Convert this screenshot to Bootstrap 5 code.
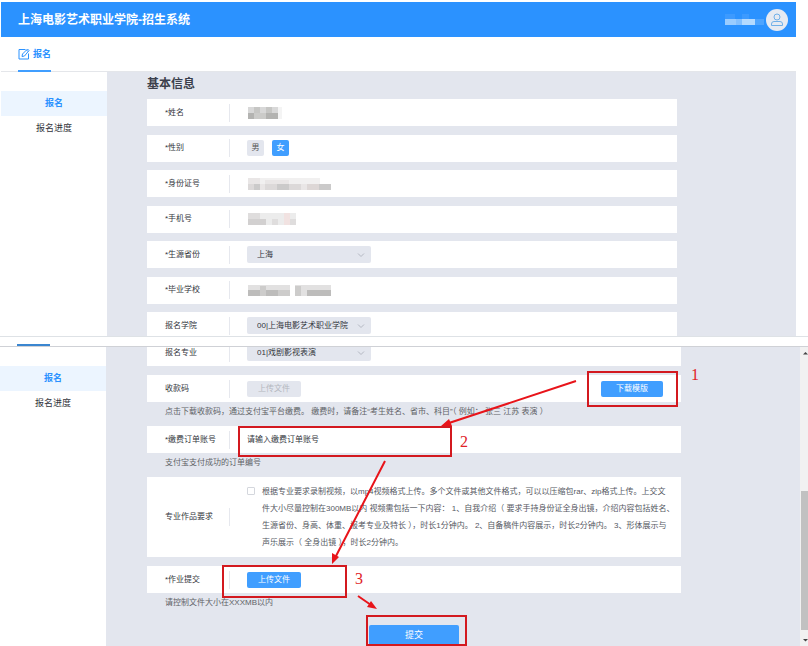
<!DOCTYPE html>
<html lang="zh-CN">
<head>
<meta charset="utf-8">
<meta name="viewport" content="width=device-width, initial-scale=1">
<title>上海电影艺术职业学院-招生系统</title>
<link href="https://cdn.jsdelivr.net/npm/bootstrap@5.3.0/dist/css/bootstrap.min.css" rel="stylesheet">
<style>
  :root { --brand: #2b92ff; --accent: #409eff; --canvas: #e3e6ee; --ink: #33363d; --soft: #606266; }
  body { font-family: "Liberation Sans", "Noto Sans CJK SC", sans-serif; font-size: 8px; line-height: 12px; color: var(--ink); background: #fff; }
  .page { min-height: 100vh; }
  .screen-a { margin: 2px 12px 0 1px; }
  .topbar { background: var(--brand); height: 35px; padding: 0 8px 0 17px; }
  .brand-name { font-size: 12px; line-height: 16px; font-weight: 700; color: #fff; margin: 0; }
  .avatar { width: 22px; height: 22px; }
  .tabs { height: 35px; padding-left: 17px; border-bottom: 1px solid #e4e6ea; }
  .tab-link { color: var(--brand); font-size: 9px; font-weight: 700; gap: 3px; border-bottom: 2px solid var(--accent); margin-bottom: -1px; }
  .side { width: 106px; background: #fff; padding-top: 19px; }
  .side a { display: block; height: 25px; line-height: 25px; font-size: 9px; text-align: center; color: var(--ink); text-decoration: none; }
  .side a.current { background: #ecf5ff; color: var(--brand); font-weight: 700; }
  .canvas { background: var(--canvas); padding-left: 40px; min-width: 0; }
  .screen-a .viewport { height: 264px; overflow: hidden; }
  .sheet-title { font-size: 12px; line-height: 16px; font-weight: 700; color: #3b3f4c; margin: 0; padding: 4px 0 7px; }
  .fields { max-width: 530px; min-height: 240px; }
  .field-row { background: #fff; min-height: 27px; padding-left: 18px; }
  .field-name { width: 65px; height: 18px; line-height: 18px; border-right: 1px solid #e6e8ee; margin-right: 17px; flex: none; }
  .chip, .act { border: 0; font-size: 8px; line-height: 16px; height: 16px; padding: 0; border-radius: 2px; background: var(--accent); color: #fff; }
  .chip { width: 17px; }
  .chip.off { background: var(--canvas); color: #555; }
  .act { width: 54px; }
  .act.wide { width: 62px; margin-right: 18px; }
  .act:disabled { background: var(--canvas); color: #b4b7be; }
  .pick { width: 124px; height: 17px; min-height: 0; padding: 0 16px 0 10px; font-size: 8px; line-height: 16px; border: 0; border-radius: 2px; color: var(--ink);
    background: var(--canvas) url("data:image/svg+xml,%3Csvg xmlns='http://www.w3.org/2000/svg' viewBox='0 0 8 8'%3E%3Cpath d='M1 2.5l3 3 3-3' fill='none' stroke='%23b4b8c2'/%3E%3C/svg%3E") no-repeat right 6px center / 8px 8px; }
  .divide { height: 10px; }
  .divide i { display: block; width: 33px; height: 2px; margin-left: 17px; background: #3a86d0; }
  .screen-b { border-top: 1px solid #cfd1d6; flex: 1 0 0; height: 300px; overflow: hidden; }
  .screen-b .canvas { padding-left: 41px; }
  .screen-b .form-flow { max-width: 534px; margin-top: -8px; }
  .hint { height: 24px; line-height: 20px; padding-left: 18px; margin: 0; color: var(--soft); white-space: nowrap; }
  .order-box { border: 0; padding: 0; width: 190px; height: 18px; font-size: 8px; color: var(--ink); background: transparent; }
  .order-box::placeholder { color: var(--ink); opacity: 1; }
  .needs { height: 80px; }
  .needs-text { color: #55585f; line-height: 17px; white-space: nowrap; }
  .needs .form-check-input { width: 8px; height: 8px; margin: 4px 7px 0 0; border-radius: 1px; border-color: #d4d7dd; flex: none; }
  .send { width: 90px; height: 21px; margin: 8px 0 0 222px; border: 0; border-radius: 2px 2px 0 0; background: var(--accent); color: #fff; font-size: 9px; line-height: 21px; padding: 0; }
  .gap-row { margin-bottom: 9px; }
  .rail { width: 8px; background: #f1f1f1; flex: none; }
  .rail-thumb { background: #c1c1c1; height: 139px; margin: 135px 0 0 1px; }
  .rail svg { display: block; width: 8px; height: 5px; }
  .notes { position: absolute; left: 0; top: 0; pointer-events: none; }
</style>
<script src="https://cdn.jsdelivr.net/npm/bootstrap@5.3.0/dist/js/bootstrap.bundle.min.js"></script>
</head>
<body>
<div class="page position-relative d-flex flex-column overflow-hidden">

  <div class="screen-a">
    <header class="topbar d-flex align-items-center justify-content-between">
      <h1 class="brand-name">上海电影艺术职业学院-招生系统</h1>
      <div class="d-flex align-items-center">
        <svg width="42" height="12" viewBox="0 0 42 12" aria-hidden="true" shape-rendering="crispEdges">
          <path fill="#3c9aff" d="M1 0h10v5H1zM18 0h7v5h-7z"/><path fill="#9accff" d="M1 5h11v6H1z"/><path fill="#84c0ff" d="M12 5h6v6h-6z"/><path fill="#b5daff" d="M18 5h13v6H18z"/><path fill="#4ea4ff" d="M31 5h9v6h-9z"/>
        </svg>
        <svg class="avatar" viewBox="0 0 22 22" role="img" aria-label="用户"><circle cx="11" cy="11" r="11" fill="#e6eaf2"/><g fill="none" stroke="#6fafe8"><circle cx="11" cy="8" r="3"/><path d="M8 12.500h6q2.500 0 2.500 2.500v1.500h-11V15q0-2.500 2.500-2.500z"/></g></svg>
      </div>
    </header>
    <nav class="tabs d-flex">
      <a class="tab-link d-flex align-items-center text-decoration-none" href="#apply">
        <svg width="12" height="12" viewBox="0 0 12 12" fill="none" stroke="currentColor"><path d="M7.500 1.500H1v9.500h9.500V5.500M4 8.500l.5-2.500L9.500 1l1.500 1.500L6.500 8zM8.500 2L10 3.500"/></svg>
        报名</a>
    </nav>
    <div class="viewport d-flex">
      <nav class="side flex-shrink-0"><a class="current" href="#apply">报名</a><a href="#progress">报名进度</a></nav>
      <main class="canvas flex-grow-1">
        <h2 class="sheet-title">基本信息</h2>
        <div class="fields d-flex flex-column justify-content-between">
          <div class="field-row d-flex align-items-center"><span class="field-name">*姓名</span>
            <svg width="40" height="14" viewBox="0 0 40 14" shape-rendering="crispEdges" aria-hidden="true"><path fill="#d8d8d8" d="M1 1h6v6H1zM13 1h6v6h-6zM25 1h6v6h-6z"/><path fill="#c6c6c4" d="M7 1h6v6H7zM19 1h6v6h-6z"/><path fill="#b3b3b1" d="M1 7h6v6H1zM19 7h12v6H19z"/><path fill="#cbcbc9" d="M7 7h12v6H7z"/><path fill="#f4f4f4" d="M31 1h4v12h-4z"/></svg></div>
          <div class="field-row d-flex align-items-center"><span class="field-name">*性别</span><button class="chip off me-2" type="button">男</button><button class="chip" type="button">女</button></div>
          <div class="field-row d-flex align-items-center"><span class="field-name">*身份证号</span>
            <svg width="90" height="14" viewBox="0 0 90 14" shape-rendering="crispEdges" aria-hidden="true"><path fill="#f1f0f0" d="M13 1h60v6H13z"/><path fill="#e9e6e6" d="M1 1h12v6H1zM18 3h24v4H18zM13 7h71v6H13z"/><path fill="#dcd9d9" d="M1 7h6v6H1zM18 7h12v6H18zM42 7h12v6H42z"/><path fill="#cbcaca" d="M7 7h6v6H7zM30 7h12v6H30zM72 7h12v6H72z"/><path fill="#ddd7d6" d="M60 7h12v6H60z"/></svg></div>
          <div class="field-row d-flex align-items-center"><span class="field-name">*手机号</span>
            <svg width="60" height="14" viewBox="0 0 60 14" shape-rendering="crispEdges" aria-hidden="true"><path fill="#ececec" d="M1 1h48v12H1z"/><path fill="#d2d0d0" d="M1 7h18v6H1z"/><path fill="#dfdddd" d="M1 1h12v6H1zM25 7h6v6h-6zM43 7h6v6h-6z"/><path fill="#f1e2e1" d="M37 1h6v12h-6z"/></svg></div>
          <div class="field-row d-flex align-items-center"><label class="field-name" for="prov">*生源省份</label><select class="form-select pick" id="prov"><option>上海</option></select></div>
          <div class="field-row d-flex align-items-center"><span class="field-name">*毕业学校</span>
            <svg width="90" height="14" viewBox="0 0 90 14" shape-rendering="crispEdges" aria-hidden="true"><path fill="#e2e1e1" d="M1 2h42v11H1zM48 2h36v11H48z"/><path fill="#bdbcbb" d="M1 7h12v6H1zM19 7h12v6H19zM60 7h24v6H60z"/><path fill="#cdcccb" d="M13 3h6v10h-6zM31 7h12v6H31zM48 3h6v10h-6z"/></svg></div>
          <div class="field-row d-flex align-items-center"><label class="field-name" for="college">报名学院</label><select class="form-select pick" id="college"><option>00|上海电影艺术职业学院</option></select></div>
        </div>
      </main>
    </div>
  </div>

  <div class="divide border-top d-flex align-items-end"><i></i></div>

  <div class="screen-b d-flex">
    <nav class="side flex-shrink-0"><a class="current" href="#apply">报名</a><a href="#progress">报名进度</a></nav>
    <main class="canvas flex-grow-1">
      <form class="form-flow">
        <div class="field-row gap-row d-flex align-items-center"><label class="field-name" for="major">报名专业</label><select class="form-select pick" id="major"><option>01|戏剧影视表演</option></select></div>
        <div class="field-row d-flex align-items-center"><span class="field-name">收款码</span><button class="act" type="button" disabled>上传文件</button><button class="act wide ms-auto" type="button">下载模版</button></div>
        <p class="hint">点击下载收款码，通过支付宝平台缴费。 缴费时，请备注“考生姓名、省市、科目”（ 例如： 张三 江苏 表演 ）</p>
        <div class="field-row d-flex align-items-center"><label class="field-name" for="order">*缴费订单账号</label><input class="order-box" id="order" type="text" placeholder="请输入缴费订单账号"></div>
        <p class="hint">支付宝支付成功的订单编号</p>
        <div class="field-row needs gap-row d-flex align-items-center"><span class="field-name">专业作品要求</span>
          <div class="d-flex"><input class="form-check-input" type="checkbox" id="agree"><label class="needs-text" for="agree">根据专业要求录制视频，以mp4视频格式上传。多个文件或其他文件格式，可以以压缩包rar、zip格式上传。上交文<br>件大小尽量控制在300MB以内 视频需包括一下内容： 1、自我介绍（ 要求手持身份证全身出镜，介绍内容包括姓名、<br>生源省份、身高、体重、报考专业及特长 ），时长1分钟内。 2、自备稿件内容展示，时长2分钟内。 3、形体展示与<br>声乐展示（ 全身出镜 ），时长2分钟内。</label></div></div>
        <div class="field-row d-flex align-items-center"><span class="field-name">*作业提交</span><button class="act" type="button">上传文件</button></div>
        <p class="hint">请控制文件大小在XXXMB以内</p>
        <button class="send d-block" type="submit">提交</button>
      </form>
    </main>
    <div class="rail d-flex flex-column" aria-hidden="true">
      <svg class="mt-1" viewBox="0 0 8 5"><path d="M3 3.500l2.500-2.500L8 3.500z" fill="#444"/></svg>
      <div class="rail-thumb"></div>
      <svg class="mt-2" viewBox="0 0 8 5"><path d="M3 1l2.500 2.500L8 1z" fill="#444"/></svg>
    </div>
  </div>

  <svg class="notes" width="808" height="646" viewBox="0 0 808 646" aria-hidden="true">
    <g fill="none" stroke="#d3191f" stroke-width="2">
      <path d="M588 372h89v34h-89zM239 427h212v29H239zM223 566h123v31H223zM367 616h99v29h-99z"/>
      <path stroke="#e8141a" d="M576 381L449 423M385 461L335 558M358 596L371 605"/>
    </g>
    <path fill="#e8141a" d="M441 426l8-7 3 7zM332 564l0-11 7 4zM377 609l-10-2 4-6z"/>
    <g fill="#e02226" font-family="Liberation Serif, serif" font-size="16"><text x="691" y="380">1</text><text x="460" y="447">2</text><text x="355" y="584">3</text></g>
  </svg>
</div>
</body>
</html>
